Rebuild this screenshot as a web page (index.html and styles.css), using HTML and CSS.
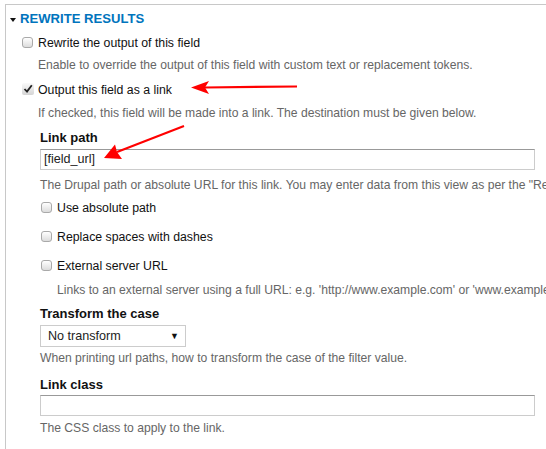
FILE: index.html
```html
<!DOCTYPE html>
<html>
<head>
<meta charset="utf-8">
<link rel="stylesheet" href="styles.css">
</head>
<body>
<div class="page">
  <div class="fieldset">
    <div class="legend"><span class="caret"></span>REWRITE RESULTS</div>

    <div class="check-row row-1"><span class="cb"></span><span class="lbl">Rewrite the output of this field</span></div>
    <div class="desc desc-1">Enable to override the output of this field with custom text or replacement tokens.</div>

    <div class="check-row row-2"><span class="cb checked"><svg viewBox="0 0 12 12" width="12" height="12"><path d="M2.5 6 L5 8.6 L9.8 2.2" fill="none" stroke="#222" stroke-width="1.8"/></svg></span><span class="lbl">Output this field as a link</span></div>
    <div class="desc desc-2">If checked, this field will be made into a link. The destination must be given below.</div>

    <div class="sub">
      <div class="field-label first">Link path</div>
      <div class="text-input">[field_url]</div>
      <div class="desc">The Drupal path or absolute URL for this link. You may enter data from this view as per the "Replacement patterns" below.</div>

      <div class="check-row sub-row first-sub"><span class="cb"></span><span class="lbl">Use absolute path</span></div>
      <div class="check-row sub-row"><span class="cb"></span><span class="lbl">Replace spaces with dashes</span></div>
      <div class="check-row sub-row"><span class="cb"></span><span class="lbl">External server URL</span></div>
      <div class="desc indent">Links to an external server using a full URL: e.g. 'http://www.example.com' or 'www.example.com'.</div>

      <div class="field-label tight">Transform the case</div>
      <div class="select"><span>No transform</span><span class="arrow">▼</span></div>
      <div class="desc">When printing url paths, how to transform the case of the filter value.</div>

      <div class="field-label">Link class</div>
      <div class="text-input short-gap"></div>
      <div class="desc last-desc">The CSS class to apply to the link.</div>
      <div class="field-label">Title text</div>
    </div>
  </div>

  <svg class="arrows" width="546" height="449" viewBox="0 0 546 449">
    <line x1="297" y1="86.5" x2="205" y2="87.5" stroke="#f00" stroke-width="2.2"/>
    <path d="M191 87.5 L209 81 L205 87.5 L209 94 Z" fill="#f00"/>
    <line x1="184" y1="126" x2="117" y2="152" stroke="#f00" stroke-width="2.2"/>
    <path d="M104 158 L115 144.5 L117 152 L122 159 Z" fill="#f00"/>
  </svg>
</div>
</body>
</html>
```

FILE: styles.css
```css
html, body {
  margin: 0;
  padding: 0;
  background: #fff;
}
body {
  width: 546px;
  height: 449px;
  overflow: hidden;
  font-family: "Liberation Sans", Arial, sans-serif;
  font-size: 13px;
  color: #222;
}
.page {
  position: relative;
  width: 546px;
  height: 449px;
  overflow: hidden;
}
.fieldset {
  margin: 4px 0 0 5px;
  width: 800px;
  height: 460px;
  border-top: 1px solid #c8c8c8;
  border-left: 1px solid #c8c8c8;
  white-space: nowrap;
}
.legend {
  display: flex;
  align-items: center;
  margin-top: 6px;
  height: 16px;
  line-height: 16px;
  padding-left: 4px;
  font-weight: bold;
  font-size: 13.1px;
  color: #0074bd;
}
.caret {
  width: 0;
  height: 0;
  border-left: 3.5px solid transparent;
  border-right: 3.5px solid transparent;
  border-top: 4px solid #111;
  margin-right: 4px;
  margin-top: 1px;
}
.check-row {
  display: flex;
  align-items: center;
  height: 16px;
  line-height: 16px;
  padding-left: 16px;
}
.row-1 { margin-top: 8px; }
.row-2 { margin-top: 9px; }
.cb {
  width: 11px;
  height: 11px;
  border: 1px solid #a9a9a9;
  border-radius: 3px;
  background: linear-gradient(#ffffff, #dcdcdc);
  margin-right: 5px;
  box-sizing: border-box;
  flex: none;
  position: relative;
  top: -1px;
}
.cb.checked {
  border: none;
  background: linear-gradient(#fafafa, #d4d4d4);
  border-radius: 2px;
  width: 12px;
  height: 12px;
  margin-right: 4px;
}
.cb svg { display: block; }
.lbl {
  color: #111;
  font-size: 12.3px;
}
.desc {
  height: 16px;
  line-height: 16px;
  font-size: 12.15px;
  color: #666;
  padding-left: 32px;
}
.desc-1 { margin-top: 6px; }
.desc-2 { margin-top: 7px; }
.sub {
  padding-left: 34px;
}
.sub .desc {
  padding-left: 0;
  margin-top: 7px;
}
.sub .desc.indent {
  padding-left: 17px;
  margin-top: 8px;
}
.sub .desc.last-desc { margin-top: 4px; }
.field-label {
  height: 16px;
  line-height: 16px;
  font-weight: bold;
  font-size: 13px;
  color: #111;
  margin-top: 11px;
}
.field-label.first { margin-top: 9px; }
.field-label.tight { margin-top: 8px; }
.text-input {
  margin-top: 3px;
  width: 495px;
  height: 21px;
  box-sizing: border-box;
  border: 1px solid #ccc;
  border-top-color: #999;
  padding-left: 3px;
  line-height: 19px;
  font-size: 12.6px;
  color: #222;
}
.text-input.short-gap { margin-top: 2px; }
.sub-row {
  padding-left: 1px;
  margin-top: 13px;
}
.sub-row.first-sub { margin-top: 7px; }
.select {
  margin-top: 3px;
  width: 146px;
  height: 22px;
  box-sizing: border-box;
  border: 1px solid #ccc;
  display: flex;
  justify-content: space-between;
  align-items: center;
  padding: 0 6px 0 7px;
  font-size: 12.6px;
  color: #222;
}
.sub .select + .desc { margin-top: 3px; }
.arrow {
  font-size: 9px;
  color: #111;
}
.arrows {
  position: absolute;
  left: 0;
  top: 0;
  pointer-events: none;
}
```
